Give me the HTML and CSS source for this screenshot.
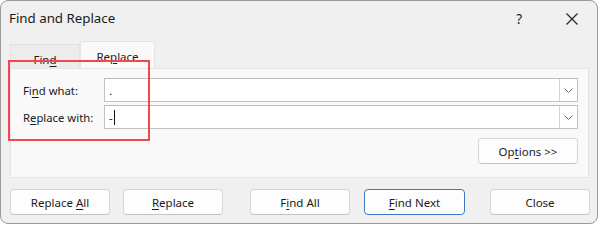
FILE: index.html
```html
<!DOCTYPE html>
<html>
<head>
<meta charset="utf-8">
<link rel="stylesheet" href="styles.css">
</head>
<body>
<div class="window">
  <div class="titlebar">
    <span class="title">Find and Replace</span>
    <span class="help">?</span>
    <svg class="close-x" width="12" height="12" viewBox="0 0 12 12"><path d="M0.5 0.5 L11.5 11.5 M11.5 0.5 L0.5 11.5" stroke="#222" stroke-width="1.2" fill="none"/></svg>
  </div>
  <div class="tabs">
    <div class="tab">Fin<u>d</u></div>
    <div class="tab active">Re<u>p</u>lace</div>
  </div>
  <div class="panel">
    <div class="row">
      <label class="lbl">Fi<u>n</u>d what:</label>
      <div class="combo"><div class="field">.</div><div class="drop"><svg width="9" height="5" viewBox="0 0 9 5"><path d="M0.5 0.5 L4.5 4.5 L8.5 0.5" stroke="#666" fill="none"/></svg></div></div>
    </div>
    <div class="row">
      <label class="lbl">R<u>e</u>place with:</label>
      <div class="combo"><div class="field">-<span class="caret"></span></div><div class="drop"><svg width="9" height="5" viewBox="0 0 9 5"><path d="M0.5 0.5 L4.5 4.5 L8.5 0.5" stroke="#666" fill="none"/></svg></div></div>
    </div>
    <div class="opts-row">
      <button class="btn opts">Op<u>t</u>ions &gt;&gt;</button>
    </div>
    <div class="highlight"></div>
  </div>
  <div class="buttons">
    <button class="btn b1">Replace <u>A</u>ll</button>
    <button class="btn b2"><u>R</u>eplace</button>
    <button class="btn b3">F<u>i</u>nd All</button>
    <button class="btn b4 default"><u>F</u>ind Next</button>
    <button class="btn b5">Close</button>
  </div>
</div>
</body>
</html>
```
FILE: styles.css
```css
* { box-sizing: border-box; }
html, body { margin: 0; padding: 0; background: #ffffff; }
body { font-family: "Segoe UI", "Noto Sans", "Open Sans", sans-serif; color: #1b1b1b; }
u { text-decoration: underline; text-underline-offset: 2px; text-decoration-thickness: 1px; }

.window {
  width: 598px; height: 224px;
  background: #f0f0f0;
  border: 1px solid #9a9a9a;
  border-radius: 8px;
  display: flex; flex-direction: column;
  overflow: hidden;
}
.titlebar {
  height: 35px; flex: none;
  display: flex; align-items: center;
  padding-left: 8px;
}
.title { font-size: 13.3px; color: #1a1a1a; flex: 1; margin-top: -1px; }
.help { font-size: 13.5px; color: #222; margin-right: 44px; }
.close-x { margin-right: 19px; }

.tabs {
  height: 32px; flex: none;
  display: flex; align-items: flex-end;
  padding-left: 9px;
}
.tab {
  width: 70px; height: 24px;
  font-size: 11.5px;
  text-align: center; line-height: 24px;
  background: #ececec;
  border: 1px solid #e2e2e2; border-bottom: none;
  padding-top: 3px;
}
.tab.active {
  width: 75px; height: 27px;
  background: #f9f9f9;
  border-color: #e4e4e4;
  padding-top: 3px;
}

.panel {
  position: relative;
  margin-left: 9px; width: 579px; height: 110px; flex: none;
  background: #f9f9f9;
  border: 1px solid #e4e4e4;
  padding: 9px 10px 0 12px;
}
.row { display: flex; align-items: center; height: 24px; margin-bottom: 3px; }
.lbl { width: 81px; font-size: 11.3px; }
.combo {
  flex: 1; height: 24px;
  display: flex;
  background: #fff;
  border: 1px solid #c2c2c2;
  border-top-color: #bdbdbd;
}
.field { flex: 1; font-size: 11.5px; line-height: 21px; padding-left: 4px; display: flex; align-items: center; }
.caret { display: inline-block; width: 1px; height: 15px; background: #111; margin-left: 1px; }
.drop {
  width: 18px; border-left: 1px solid #d4d4d4;
  display: flex; align-items: center; justify-content: center;
  padding-top: 1px;
}
.opts-row { display: flex; justify-content: flex-end; margin-top: 9px; }

.btn {
  height: 26px;
  font-family: inherit; font-size: 11.5px; color: #1b1b1b;
  background: #fdfdfd;
  border: 1px solid #d6d6d6; border-bottom-color: #c4c4c4;
  border-radius: 4px;
  padding: 0;
}
.opts { width: 100px; }

.highlight {
  position: absolute;
  left: -3px; top: -9px;
  width: 142px; height: 81px;
  border: 2px solid #f2474f;
}

.buttons {
  display: flex; padding-left: 9px; margin-top: 11px;
}
.buttons .btn { width: 100px; height: 26px; }
.b2 { margin-left: 13px; }
.b3 { margin-left: 27px; }
.b4 { margin-left: 14px; width: 101px !important; }
.b5 { margin-left: 25px; }
.default { border: 1px solid #3c79c4; }
```
